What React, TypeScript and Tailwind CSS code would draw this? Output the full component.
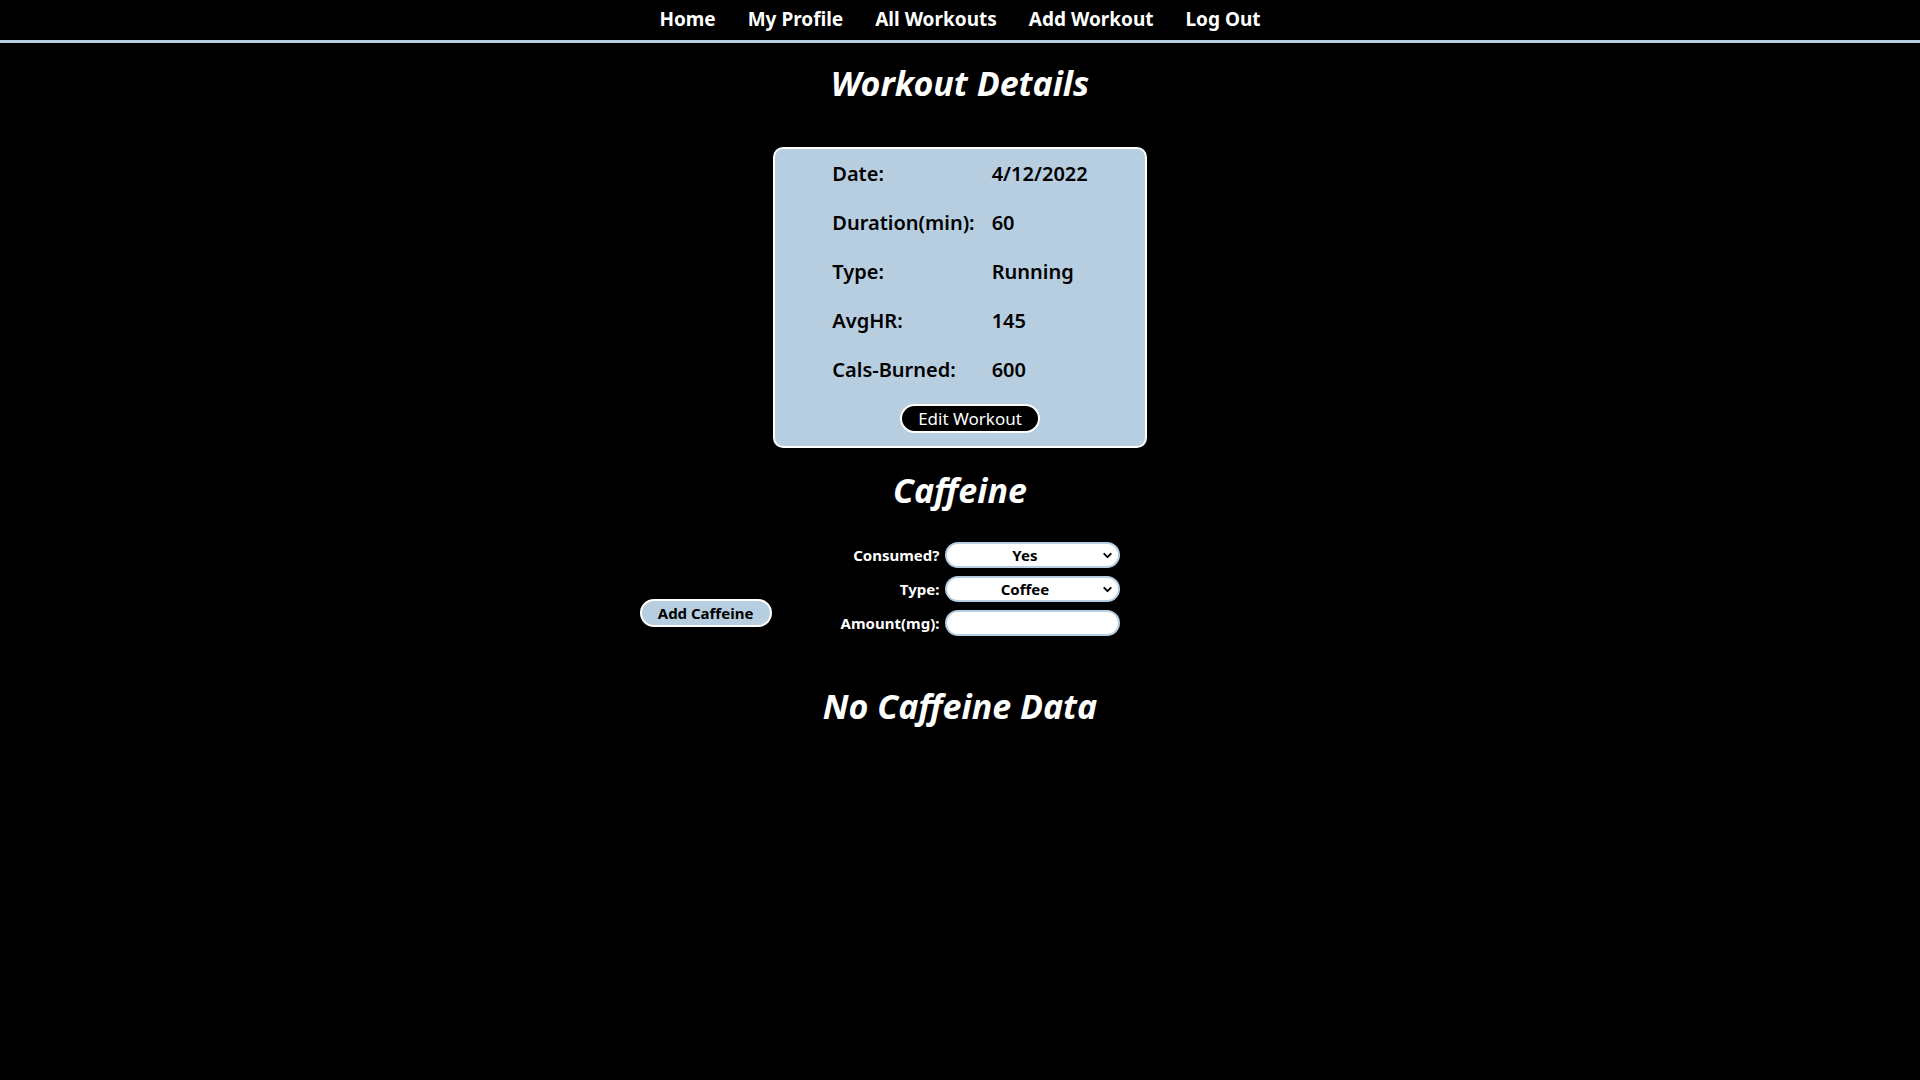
import { ChevronDown } from "lucide-react";

const font = { fontFamily: '"Noto Sans", "Open Sans", sans-serif' };

const navLinks = ["Home", "My Profile", "All Workouts", "Add Workout", "Log Out"];

const details = [
  { label: "Date:", value: "4/12/2022" },
  { label: "Duration(min):", value: "60" },
  { label: "Type:", value: "Running" },
  { label: "AvgHR:", value: "145" },
  { label: "Cals-Burned:", value: "600" },
];

const SelectBox = ({ value, options }: { value: string; options: string[] }) => (
  <div className="relative w-[175px]">
    <select
      defaultValue={value}
      className="h-[26px] w-full appearance-none rounded-full border-2 border-[#b7cee0] bg-white pl-[8px] pr-[24px] text-center text-[15px] font-bold text-black outline-none"
      style={{ textAlignLast: "center" }}
    >
      {options.map((o) => (
        <option key={o}>{o}</option>
      ))}
    </select>
    <ChevronDown className="pointer-events-none absolute right-[6px] top-[7px] h-[13px] w-[13px] text-black" strokeWidth={3.5} />
  </div>
);

export default function App() {
  return (
    <div className="min-h-screen w-full bg-black text-white" style={font}>
      {/* NAV */}
      <nav className="flex h-[43px] items-start justify-center gap-8 border-b-[3px] border-[#b7cee0]">
        {navLinks.map((l) => (
          <a key={l} className="pt-[5px] text-[19px] font-bold leading-[28px] text-white">
            {l}
          </a>
        ))}
      </nav>

      <h1 className="mt-[20px] text-center text-[34px] font-bold italic leading-[40px]">Workout Details</h1>

      {/* DETAILS CARD */}
      <div className="mx-auto mt-[44px] flex w-[374px] flex-col items-center rounded-[10px] border-2 border-white bg-[#b7cee0] pb-[13px] text-black">
        <div className="grid grid-cols-[auto_auto] gap-x-[17px]">
          {details.map((d) => (
            <div key={d.label} className="contents">
              <div className="flex h-[49px] items-center text-[20px] font-semibold">{d.label}</div>
              <div className="flex h-[49px] items-center text-[20px] font-semibold">{d.value}</div>
            </div>
          ))}
        </div>
        <button className="ml-[20px] mt-[10px] h-[29px] rounded-full border-2 border-white bg-black px-[16px] text-[17px] leading-none text-white">
          Edit Workout
        </button>
      </div>

      <h2 className="mt-[22px] text-center text-[34px] font-bold italic leading-[40px]">Caffeine</h2>

      {/* CAFFEINE FORM */}
      <div className="mt-[32px] flex items-end justify-center pr-[160px]">
        <button className="mb-[9px] h-[28px] w-[132px] rounded-full border-2 border-white bg-[#b7cee0] text-[15px] font-bold leading-none text-black">
          Add Caffeine
        </button>
        <div className="ml-[69px] grid grid-cols-[auto_auto] items-center gap-x-[6px] gap-y-[8px]">
          <label className="text-right text-[15px] font-bold">Consumed?</label>
          <SelectBox value="Yes" options={["Yes", "No"]} />
          <label className="text-right text-[15px] font-bold">Type:</label>
          <SelectBox value="Coffee" options={["Coffee", "Tea", "Energy Drink", "Soda"]} />
          <label className="text-right text-[15px] font-bold">Amount(mg):</label>
          <input className="h-[26px] w-[175px] rounded-full border-2 border-[#b7cee0] bg-white px-3 text-[15px] text-black outline-none" />
        </div>
      </div>

      <h2 className="mt-[50px] text-center text-[34px] font-bold italic leading-[40px]">No Caffeine Data</h2>
    </div>
  );
}
